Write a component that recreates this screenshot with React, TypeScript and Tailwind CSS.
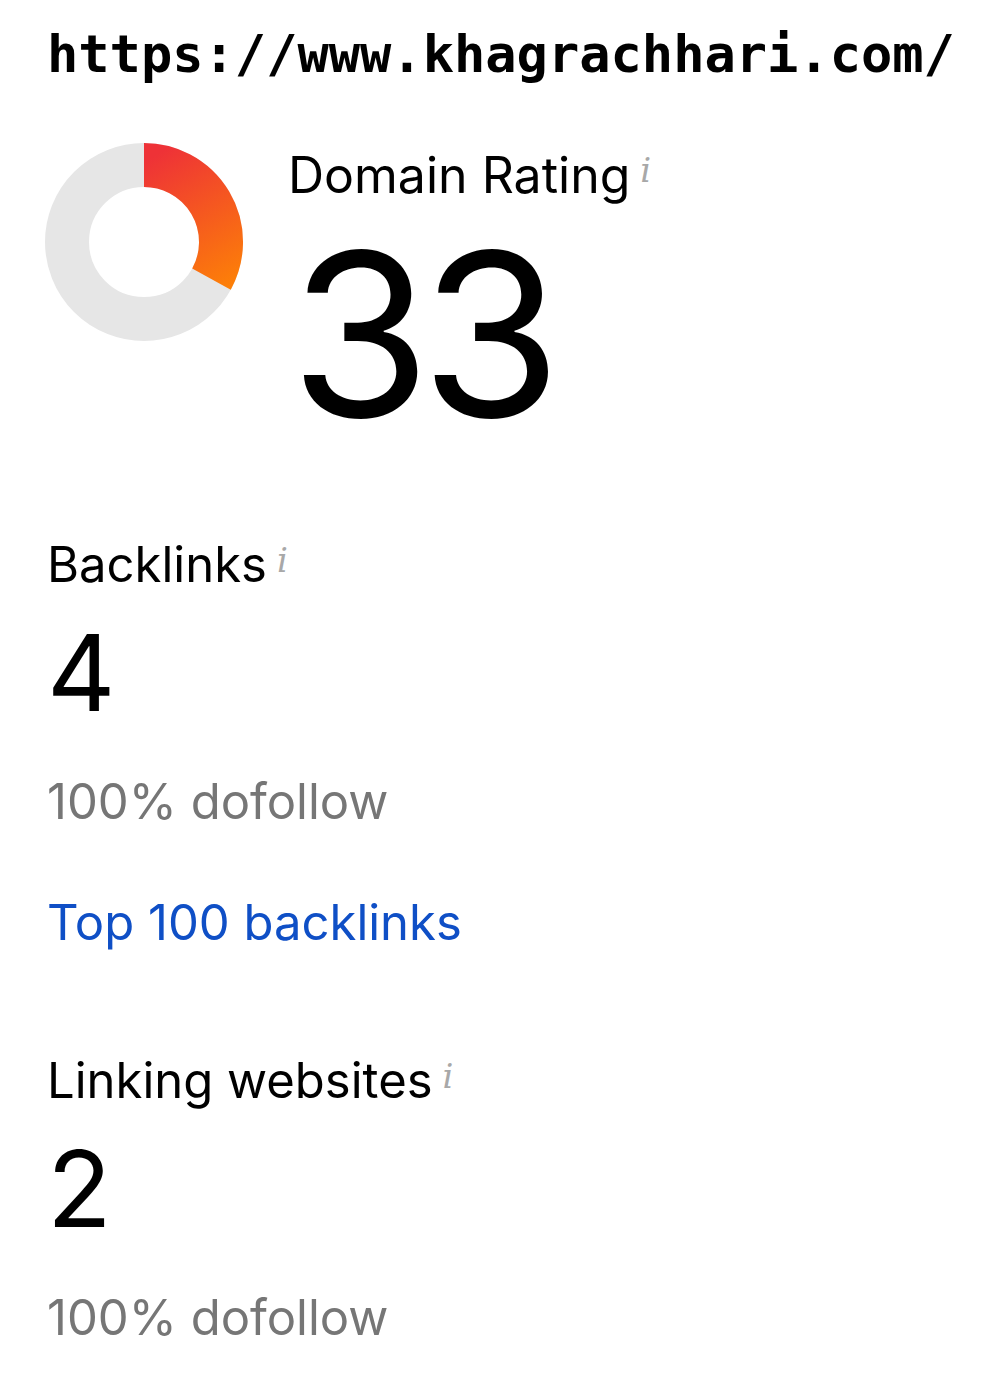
const info = (
  <span className="relative top-[3px] ml-[10px] align-top text-[34px] italic leading-none text-[#a8a8a8] [font-family:'DejaVu_Serif',serif]">i</span>
);

function Donut({ value }: { value: number }) {
  const cx = 100;
  const cy = 100;
  const r = 77;
  const a = (value / 100) * 2 * Math.PI;
  const x = cx + r * Math.sin(a);
  const y = cy - r * Math.cos(a);
  const large = value > 50 ? 1 : 0;
  return (
    <svg width="200" height="200" viewBox="0 0 200 200">
      <defs>
        <linearGradient id="dr" gradientUnits="userSpaceOnUse" x1="100" y1="20" x2="190" y2="170">
          <stop offset="0%" stopColor="#ee3237" />
          <stop offset="100%" stopColor="#ff8c00" />
        </linearGradient>
      </defs>
      <circle cx={cx} cy={cy} r={r} fill="none" stroke="#e6e6e6" strokeWidth="44" />
      <path
        d={`M ${cx} ${cy - r} A ${r} ${r} 0 ${large} 1 ${x} ${y}`}
        fill="none"
        stroke="url(#dr)"
        strokeWidth="44"
      />
    </svg>
  );
}

function Metric({ label, value, sub, link }: { label: string; value: string; sub: string; link?: string }) {
  return (
    <section className="mt-[109px] first:mt-0">
      <h2 className="text-[49px] leading-none text-black">
        {label}
        {info}
      </h2>
      <div className="mt-[31px] text-[106px] leading-none text-black">{value}</div>
      <p className="mt-[51px] text-[49px] leading-none text-[#767676]">{sub}</p>
      {link && <a className="mt-[72px] block text-[49px] leading-none text-[#0f4fc6]">{link}</a>}
    </section>
  );
}

export default function App() {
  return (
    <div className="min-h-[1378px] bg-white pl-[47px] pt-[28px] [font-family:Inter,sans-serif]">
      <h1 className="text-[52px] font-bold leading-none text-black [font-family:'DejaVu_Sans_Mono',monospace]">
        https://www.khagrachhari.com/
      </h1>
      <div className="mt-[62px] flex">
        <div className="-ml-[3px]">
          <Donut value={33} />
        </div>
        <div className="ml-[44px] pt-[8px]">
          <h2 className="text-[50px] leading-none text-black">
            Domain Rating
            {info}
          </h2>
          <div className="ml-[2px] mt-[20px] text-[228px] leading-none tracking-[-10px] text-black">33</div>
        </div>
      </div>
      <div className="mt-[92px]">
        <Metric label="Backlinks" value="4" sub="100% dofollow" link="Top 100 backlinks" />
        <Metric label="Linking websites" value="2" sub="100% dofollow" />
      </div>
    </div>
  );
}
